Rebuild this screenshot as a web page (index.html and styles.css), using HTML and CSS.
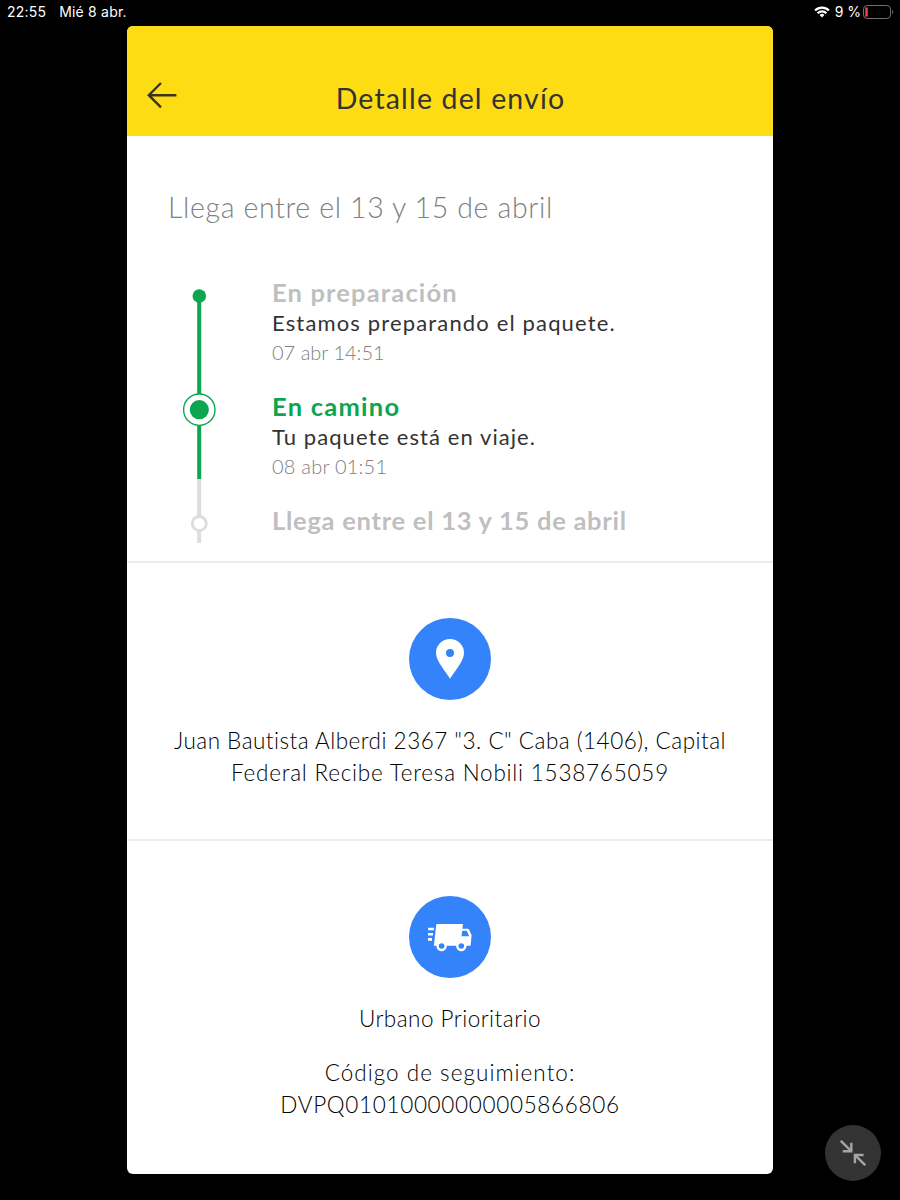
FILE: index.html
```html
<!DOCTYPE html>
<html lang="es">

<head>
    <meta charset="UTF-8">
    <meta name="viewport" content="width=device-width, initial-scale=1.0">
    <title>Detalle del envío</title>
    <link rel="stylesheet" href="styles.css">
</head>

<body>
    <!-- barra de estado -->
    <div class="status">
        <span class="time">22:55</span>
        <span class="date">Mié 8 abr.</span>
        <div class="status_right">
            <svg class="wifi" width="16" height="12" viewBox="0 0 17 13" fill="none" stroke="#fff" stroke-width="2.3">
                <path d="M1 4.9a10.6 10.6 0 0 1 15 0M3.7 7.8a6.8 6.8 0 0 1 9.6 0" />
                <path d="M8.5 12.4L5.9 9.8a3.7 3.7 0 0 1 5.2 0z" fill="#fff" stroke="none" />
            </svg>
            <span class="percent">9 %</span>
            <svg class="battery" width="31" height="14" viewBox="0 0 31 14">
                <rect x=".5" y=".5" width="27" height="13" rx="3.6" fill="none" stroke="#6f6f6f" />
                <rect x="2.3" y="2.3" width="2.4" height="9.4" rx="1" fill="#f8453f" />
                <path d="M29.2 5c1.6.6 1.6 3.4 0 4z" fill="#6f6f6f" />
            </svg>
        </div>
    </div>

    <div class="card">
        <div class="header">
            <svg class="back" width="30" height="27" viewBox="0 0 30 27" fill="none" stroke="#3a3420" stroke-width="2.4">
                <path d="M14 1L1.8 13.2 14 25.4M1.8 13.2H29.4" />
            </svg>
            <h1>Detalle del envío</h1>
        </div>

        <div class="section shipping">
            <h2>Llega entre el 13 y 15 de abril</h2>
            <div class="tracking">
                <svg class="line" width="34" height="256" viewBox="0 0 34 256">
                    <path d="M17.2 7V192" stroke="#0ca650" stroke-width="4" />
                    <path d="M17.2 192V256" stroke="#ddd" stroke-width="4" />
                    <circle cx="17.3" cy="9" r="6.8" fill="#0ca650" />
                    <circle cx="17.3" cy="122.7" r="15.7" fill="#fff" stroke="#0ca650" stroke-width="1.4" />
                    <circle cx="17.3" cy="122.7" r="9.6" fill="#0ca650" />
                    <circle cx="17.3" cy="236.5" r="7" fill="#fff" stroke="#ddd" stroke-width="3" />
                </svg>
                <ul>
                    <li>
                        <h3 class="preparing">En preparación</h3>
                        <p>Estamos preparando el paquete.</p>
                        <span>07 abr 14:51</span>
                    </li>
                    <li class="active">
                        <h3>En camino</h3>
                        <p>Tu paquete está en viaje.</p>
                        <span>08 abr 01:51</span>
                    </li>
                    <li>
                        <h3>Llega entre el 13 y 15 de abril</h3>
                    </li>
                </ul>
            </div>
        </div>

        <div class="section address">
            <svg class="icon" width="82" height="82" viewBox="0 0 82 82">
                <circle cx="41" cy="41" r="41" fill="#3483fa" />
                <path d="M41 60.8C37 53.5 27 43.5 27 35a14 14 0 0 1 28 0C55 43.5 45 53.5 41 60.8z" fill="#fff" />
                <circle cx="41" cy="35" r="4" fill="#3483fa" />
            </svg>
            <p class="street">Juan Bautista Alberdi 2367 "3. C" Caba (1406), Capital</p>
            <p class="receiver">Federal Recibe Teresa Nobili 1538765059</p>
        </div>

        <div class="section carrier">
            <svg class="icon" width="82" height="82" viewBox="0 0 82 82">
                <circle cx="41" cy="41" r="41" fill="#3483fa" />
                <path d="M28.2 28H54l-.6 4.8h5.2q1.2 0 1.7 1.1l2.3 5.3-1 10.6H24.9L27.2 29q.1-1 1-1z" fill="#fff" />
                <path d="M53.2 34.8h4.6l2.4 5.4h-7.7z" fill="#3483fa" />
                <path d="M19.2 33h5.8M19 38.2h5M19 43.4h4" stroke="#fff" stroke-width="2.6" />
                <circle cx="32.6" cy="50" r="4" fill="#3483fa" stroke="#fff" stroke-width="2.4" />
                <circle cx="52.3" cy="50" r="4" fill="#3483fa" stroke="#fff" stroke-width="2.4" />
            </svg>
            <p class="service">Urbano Prioritario</p>
            <p class="label">Código de seguimiento:</p>
            <p class="code">DVPQ01010000000005866806</p>
        </div>
    </div>

    <!-- boton para achicar -->
    <div class="shrink">
        <svg width="26" height="26" viewBox="0 0 26 26" fill="none" stroke="#a5a5a5" stroke-width="2.4">
            <path d="M.8.8L11.5 11.3M2.7 11.2H11.3V2.8" />
            <path d="M25.2 25.2L14.8 14.9M14.9 23.2V15H23.6" />
        </svg>
    </div>
</body>

</html>
```
FILE: styles.css
```css
* {
    margin: 0;
    padding: 0;
    box-sizing: border-box;
}

li {
    list-style: none;
}

svg {
    display: block;
}

body {
    width: 900px;
    height: 1200px;
    overflow: hidden;
    background-color: #000;
    color: #333;
    font-family: Lato, "Open Sans", sans-serif;
    white-space: nowrap;
}

.status {
    display: flex;
    align-items: center;
    height: 26px;
    padding: 0 6px 3px 7px;
    color: #fff;
    font-family: Inter, sans-serif;
    font-size: 14px;
    letter-spacing: .2px;
}

.date {
    margin-left: 13px;
}

.status_right {
    display: flex;
    align-items: center;
    margin-left: auto;
}

.percent {
    margin: 0 2px 0 5px;
    letter-spacing: 0;
}

.card {
    width: 646px;
    height: 1148px;
    margin: 0 auto;
    background-color: #fff;
    border-radius: 6px;
    overflow: hidden;
}

.header {
    display: flex;
    height: 110px;
    padding: 56px 20px 0;
    background-color: #fddc13;
}

.header h1 {
    flex: 1;
    margin: -1px 29px 0 0;
    line-height: 34px;
    font-size: 28.5px;
    font-weight: 400;
    letter-spacing: 1.15px;
    text-align: center;
}

.section {
    border-bottom: 2px solid #ececec;
}

.shipping {
    height: 427px;
    padding: 53px 41px 0;
}

.shipping h2 {
    line-height: 36px;
    color: #808080;
    font-size: 28.5px;
    font-weight: 300;
    letter-spacing: .63px;
}

.tracking {
    display: flex;
    padding: 62px 0 0 14px;
}

.tracking ul {
    margin: -12px 0 0 56px;
}

.tracking li {
    height: 114px;
}

.tracking h3 {
    line-height: 34px;
    color: #bfbfbf;
    font-size: 25.5px;
    font-weight: 700;
    letter-spacing: .73px;
}

.tracking h3.preparing {
    letter-spacing: 1.15px;
}

.tracking .active h3 {
    color: #0ca650;
    letter-spacing: 1.25px;
}

.tracking p {
    line-height: 28px;
    font-size: 22px;
    letter-spacing: 1.15px;
}

.tracking .active p {
    letter-spacing: 1.07px;
}

.tracking span {
    display: block;
    padding-top: 1px;
    line-height: 28px;
    color: #808080;
    font-size: 20px;
    font-weight: 300;
}

.tracking .active span {
    letter-spacing: .22px;
}

.address,
.carrier {
    height: 278px;
    padding-top: 55px;
    color: #000;
    font-size: 22.5px;
    font-weight: 300;
    line-height: 32px;
    text-align: center;
}

.icon {
    margin: 0 auto 25px;
}

.street {
    letter-spacing: .49px;
}

.receiver {
    letter-spacing: .77px;
}

.carrier {
    height: 333px;
    border-bottom: 0;
}

.service {
    margin-bottom: 22px;
    letter-spacing: .47px;
}

.label {
    letter-spacing: 1.03px;
}

.code {
    letter-spacing: .67px;
}

.shrink {
    position: absolute;
    left: 825px;
    top: 1125px;
    display: flex;
    align-items: center;
    justify-content: center;
    width: 56px;
    height: 56px;
    border-radius: 50%;
    background-color: #333;
}
```
